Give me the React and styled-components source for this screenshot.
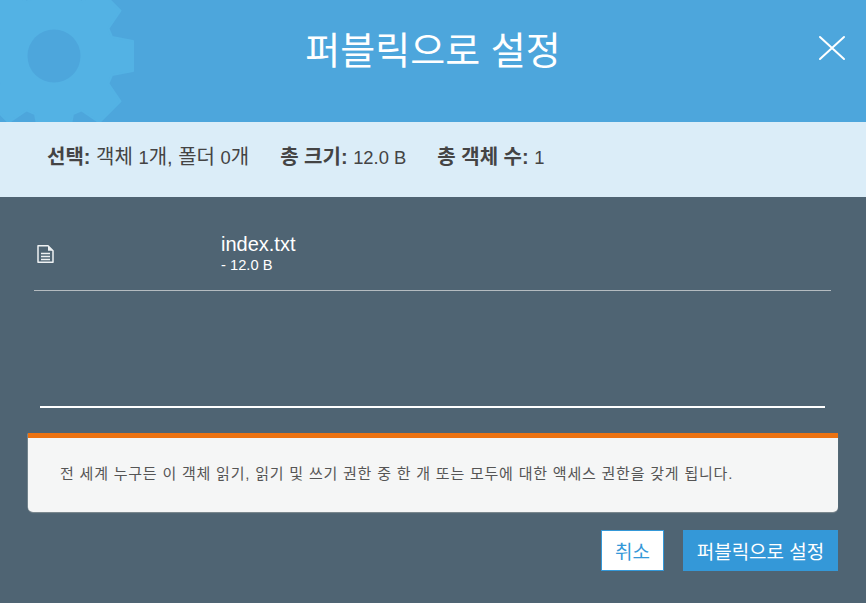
import React from "react";
import styled, { createGlobalStyle } from "styled-components";

const Global = createGlobalStyle`
  html, body { margin: 0; padding: 0; background: #4f6473; }
  body { font-family: "Liberation Sans", "Noto Sans CJK KR", sans-serif; }
`;

const Page = styled.div`
  width: 866px;
  height: 603px;
  display: flex;
  flex-direction: column;
  overflow: hidden;
  background: #4f6473;
`;

const Header = styled.header`
  position: relative;
  height: 122px;
  flex: none;
  display: flex;
  align-items: center;
  justify-content: center;
  overflow: hidden;
  background: #4da6dc;
`;

const Gear = styled.svg`
  position: absolute;
  left: -26px;
  top: -24px;
  width: 160px;
  height: 160px;
`;

const Title = styled.h1`
  position: relative;
  margin: 0 0 21px;
  font-size: 38px;
  font-weight: 400;
  line-height: 46px;
  color: #fff;
`;

const Close = styled.button`
  position: absolute;
  right: 20px;
  top: 35px;
  width: 28px;
  height: 26px;
  padding: 0;
  border: 0;
  background: none;
  display: flex;
`;

const Summary = styled.section`
  height: 75px;
  flex: none;
  box-sizing: border-box;
  padding: 0 47px 8px;
  display: flex;
  align-items: center;
  gap: 31px;
  background: #dbedf8;
  color: #444;
  font-size: 20px;
`;

const Stat = styled.span`
  white-space: nowrap;
  b { font-weight: 700; }
`;

const Num = styled.span`
  font-size: 18.4px;
`;

const Body = styled.main`
  flex: 1;
  display: flex;
  flex-direction: column;
  padding: 0 28px;
`;

const FileRow = styled.div`
  height: 94px;
  margin: 0 7px 0 6px;
  box-sizing: border-box;
  border-bottom: 1px solid #b4bbc0;
  display: grid;
  grid-template-columns: 187px 1fr;
  align-items: center;
  padding-top: 20px;
  color: #fff;
`;

const FileIcon = styled.svg`
  width: 17px;
  height: 18px;
  margin-left: 3px;
`;

const FileName = styled.div`
  font-size: 20px;
  line-height: 22px;
`;

const FileSize = styled.div`
  font-size: 14.7px;
  line-height: 20px;
`;

const Rule = styled.div`
  height: 2px;
  margin: 115px 13px 0 12px;
  background: #fff;
`;

const Notice = styled.div`
  height: 79px;
  margin-top: 25px;
  box-sizing: border-box;
  border-top: 5px solid #ec7211;
  border-radius: 0 0 5px 5px;
  padding: 0 32px 5px;
  display: flex;
  align-items: center;
  background: #f5f6f6;
  box-shadow: 0 1px 1px #7f8b92, -1px 0 0 -0.5px #98a2a8;
  color: #555;
  font-size: 15px;
  letter-spacing: 0.79px;
  white-space: nowrap;
`;

const Actions = styled.div`
  margin-top: 18px;
  display: flex;
  justify-content: flex-end;
  gap: 19px;
`;

const Button = styled.button`
  height: 41px;
  box-sizing: border-box;
  width: ${(p) => (p.$primary ? "155px" : "63px")};
  padding: 0;
  border: 1px solid #3498d8;
  border-radius: 0;
  background: ${(p) => (p.$primary ? "#3498d8" : "#fff")};
  color: ${(p) => (p.$primary ? "#fff" : "#3498d8")};
  font: 400 19px "Liberation Sans", "Noto Sans CJK KR", sans-serif;
`;

function gearPath(cx, cy) {
  const pts = [];
  const rotate = (x, y, a) => [
    cx + x * Math.cos(a) - y * Math.sin(a),
    cy + x * Math.sin(a) + y * Math.cos(a),
  ];
  for (let i = 0; i < 8; i++) {
    const a = (i * Math.PI) / 4;
    pts.push(rotate(58, -19, a), rotate(79, -15, a), rotate(79, 15, a), rotate(58, 19, a));
  }
  return "M" + pts.map((p) => p.map((n) => n.toFixed(1)).join(" ")).join("L") + "Z";
}

export default function App() {
  return (
    <Page>
      <Global />
      <Header>
        <Gear viewBox="0 0 160 160">
          <path
            fill="#53b2e4"
            stroke="#53b2e4"
            strokeWidth="2"
            strokeLinejoin="round"
            d={gearPath(80, 80)}
          />
          <circle cx="80" cy="80" r="26.5" fill="#4da6dc" />
        </Gear>
        <Title>퍼블릭으로 설정</Title>
        <Close aria-label="닫기">
          <svg viewBox="0 0 28 26" width="28" height="26">
            <path d="M2 2 L26 24 M26 2 L2 24" stroke="#fff" strokeWidth="2" strokeLinecap="round" />
          </svg>
        </Close>
      </Header>
      <Summary>
        <Stat><b>선택:</b> 객체 <Num>1</Num>개, 폴더 <Num>0</Num>개</Stat>
        <Stat><b>총 크기:</b> <Num>12.0 B</Num></Stat>
        <Stat><b>총 객체 수:</b> <Num>1</Num></Stat>
      </Summary>
      <Body>
        <FileRow>
          <FileIcon viewBox="0 0 17 18">
            <path
              d="M1 .8h10l5 5v11.4h-15z"
              fill="none"
              stroke="#eef1f3"
              strokeWidth="1.5"
              strokeLinejoin="round"
            />
            <path d="M11 .8l5 5h-5z" fill="#eef1f3" />
            <path d="M4 8.5h9M4 11.5h9M4 14.5h9" stroke="#eef1f3" strokeWidth="1.3" />
          </FileIcon>
          <div>
            <FileName>index.txt</FileName>
            <FileSize>- 12.0 B</FileSize>
          </div>
        </FileRow>
        <Rule />
        <Notice>전 세계 누구든 이 객체 읽기, 읽기 및 쓰기 권한 중 한 개 또는 모두에 대한 액세스 권한을 갖게 됩니다.</Notice>
        <Actions>
          <Button>취소</Button>
          <Button $primary>퍼블릭으로 설정</Button>
        </Actions>
      </Body>
    </Page>
  );
}
